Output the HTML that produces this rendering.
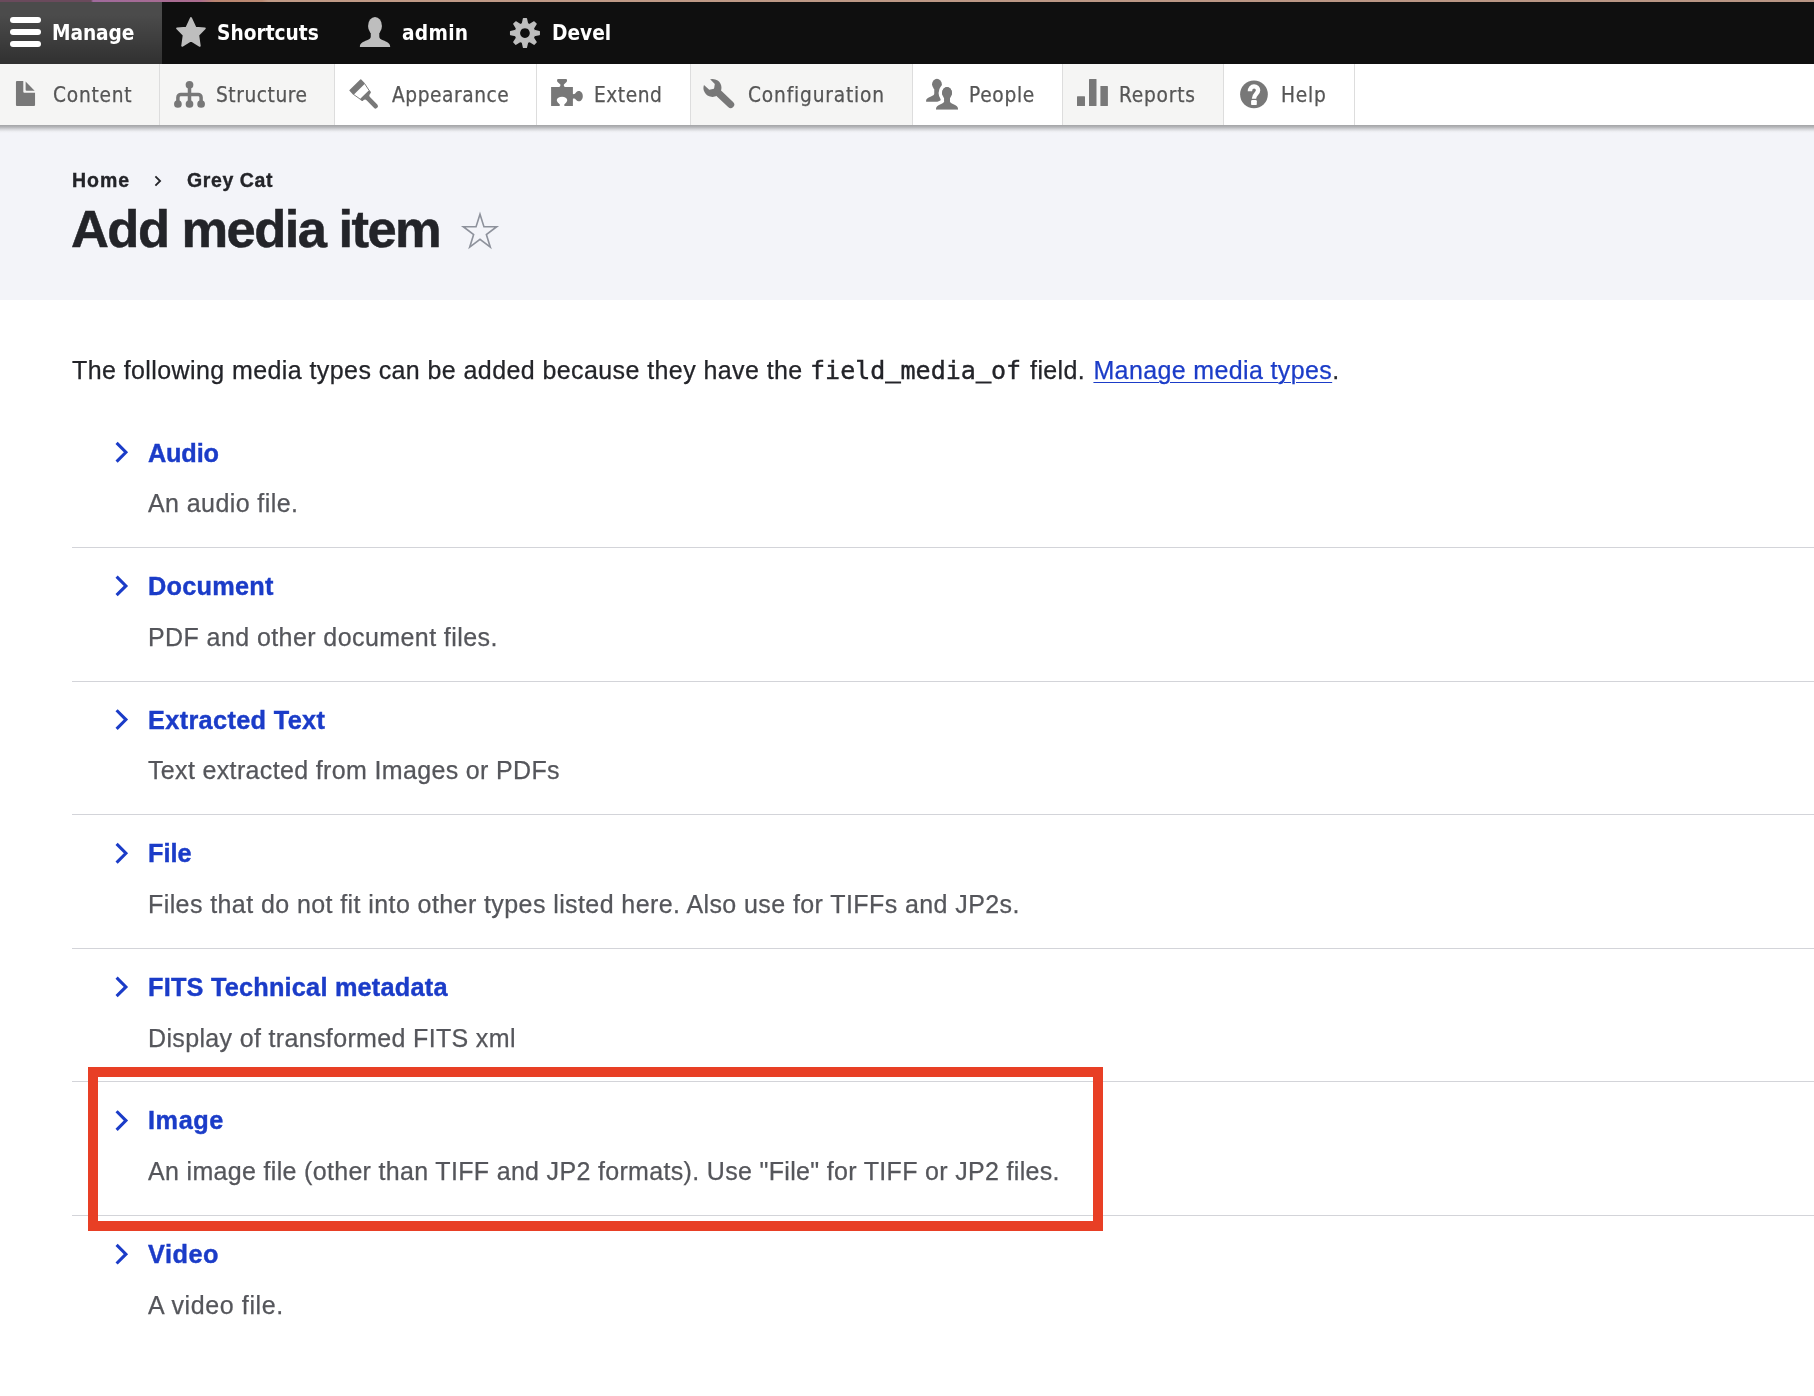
<!DOCTYPE html>
<html lang="en">
<head>
<meta charset="utf-8">
<title>Add media item | Islandora</title>
<style>
html,body{margin:0;padding:0;}
body{width:1814px;height:1396px;position:relative;overflow:hidden;background:#fff;
  font-family:"Liberation Sans",sans-serif;color:#232429;}
.abs{position:absolute;white-space:nowrap;}
span.abs,h1.abs,p.abs{will-change:transform;}
/* ---------- top strip ---------- */
#strip{left:0;top:0;width:1814px;height:2px;
  background:linear-gradient(90deg,#6a4a5c 0,#6a4a5c 91px,#a06a9c 93px,#ab6c8e 200px,#b9846f 215px,#bb8a72 262px,#c09a86 268px,#b89584 100%);}
/* ---------- toolbar bar ---------- */
#bar{left:0;top:2px;width:1814px;height:62px;background:#0f0f0f;}
#manage{left:0;top:2px;width:162px;height:62px;
  background:linear-gradient(rgba(255,255,255,.25) 20%,rgba(255,255,255,0) 200%);}
.tb{font-family:"DejaVu Sans Condensed","DejaVu Sans",sans-serif;font-weight:bold;font-size:20.7px;line-height:30px;color:#fff;top:18px;}
/* ---------- tray ---------- */
#tray{left:0;top:64px;width:1814px;height:61px;background:#fff;}
#trayshadow{left:0;top:125px;width:1814px;height:8px;
  background:linear-gradient(#a3a4a6 0,#b4b5b8 25%,#d6d7db 55%,#ecedf1 80%,#f3f4f9 100%);}
.tab{top:64px;height:61px;border-right:1px solid #dddddd;box-sizing:border-box;}
.tab.g{background:#f5f5f4;}
.tr{-webkit-text-stroke:.25px #565656;font-family:"DejaVu Sans Condensed","DejaVu Sans",sans-serif;font-size:20.7px;letter-spacing:.55px;line-height:30px;color:#565656;top:80px;}
/* ---------- header ---------- */
#header{left:0;top:133px;width:1814px;height:167px;background:#f3f4f9;}
.bc{-webkit-text-stroke:.35px #232429;font-weight:bold;font-size:19.5px;letter-spacing:.6px;line-height:24px;top:168px;color:#232429;}
#title{-webkit-text-stroke:.5px #232429;left:71px;top:199px;font-weight:bold;font-size:52.5px;line-height:60px;letter-spacing:-1.55px;color:#232429;}
/* ---------- content ---------- */
#intro{-webkit-text-stroke:.25px;left:72px;top:355px;font-size:25px;letter-spacing:.37px;line-height:30px;color:#232429;}
#intro code{font-family:"DejaVu Sans Mono","Liberation Mono",monospace;font-size:25.05px;letter-spacing:0;margin:0 1.600px 0 0;-webkit-text-stroke:.4px;}
#in_a{letter-spacing:.41px;}
.us{position:relative;top:-2.100px;-webkit-text-stroke:1px #232429;}
#in_b{margin-right:1px;}
#intro a{color:#1b3cc8;text-decoration:underline;text-decoration-thickness:1.2px;text-underline-offset:3px;}
.it{-webkit-text-stroke:.4px #1b3cc8;left:147.500px;font-weight:bold;font-size:25.3px;letter-spacing:.3px;line-height:30px;color:#1b3cc8;}
.ds{-webkit-text-stroke:.25px #55565b;left:148px;font-size:25px;letter-spacing:.37px;line-height:30px;color:#55565b;}
.hr{left:72px;width:1742px;height:1px;background:#d3d4d9;}
#redbox{left:88px;top:1067px;width:1015px;height:164px;box-sizing:border-box;border:10px solid #e83f25;}
svg{position:absolute;left:0;top:0;overflow:visible;}
</style>
</head>
<body>
<div class="abs" id="strip"></div>
<div class="abs" id="bar"></div>
<div class="abs" id="manage"></div>
<div class="abs" id="tray"></div>
<div class="abs tab g" style="left:0;width:160px"></div>
<div class="abs tab g" style="left:160px;width:175px"></div>
<div class="abs tab" style="left:335px;width:202px"></div>
<div class="abs tab" style="left:537px;width:154px"></div>
<div class="abs tab g" style="left:691px;width:222px"></div>
<div class="abs tab" style="left:913px;width:150px"></div>
<div class="abs tab g" style="left:1063px;width:161px"></div>
<div class="abs tab" style="left:1224px;width:131px"></div>
<div class="abs" id="trayshadow"></div>
<div class="abs" id="header"></div>

<span class="abs tb" id="t_manage" style="left:51.500px;letter-spacing:-.1px">Manage</span>
<span class="abs tb" id="t_shortcuts" style="left:217px">Shortcuts</span>
<span class="abs tb" id="t_admin" style="left:401.500px;letter-spacing:.3px">admin</span>
<span class="abs tb" id="t_devel" style="left:552px">Devel</span>

<span class="abs tr" id="t_content" style="left:53px;letter-spacing:.75px">Content</span>
<span class="abs tr" id="t_structure" style="left:216px">Structure</span>
<span class="abs tr" id="t_appearance" style="left:392px">Appearance</span>
<span class="abs tr" id="t_extend" style="left:594px">Extend</span>
<span class="abs tr" id="t_config" style="left:748px;letter-spacing:.82px">Configuration</span>
<span class="abs tr" id="t_people" style="left:969px;letter-spacing:.69px">People</span>
<span class="abs tr" id="t_reports" style="left:1119px;letter-spacing:.78px">Reports</span>
<span class="abs tr" id="t_help" style="left:1281px;letter-spacing:.75px">Help</span>

<span class="abs bc" id="bc_home" style="left:72px;letter-spacing:1px">Home</span>
<span class="abs bc" id="bc_cat" style="left:187px">Grey Cat</span>
<h1 class="abs" id="title" style="margin:0">Add media item</h1>

<p class="abs" id="intro" style="margin:0"><span id="in_a">The following media types can be added because they have the</span> <code id="in_code">field<span class="us">_</span>media<span class="us">_</span>of</code> <span id="in_b">field.</span> <a id="in_link">Manage media types</a>.</p>

<span class="abs it" id="i0" style="top:437.90px;letter-spacing:-0.180px">Audio</span>
<span class="abs ds" id="d0" style="top:487.90px;letter-spacing:0.412px">An audio file.</span>
<div class="abs hr" style="top:547px"></div>
<span class="abs it" id="i1" style="top:571.41px;letter-spacing:0.233px">Document</span>
<span class="abs ds" id="d1" style="top:621.57px;letter-spacing:0.417px">PDF and other document files.</span>
<div class="abs hr" style="top:681px"></div>
<span class="abs it" id="i2" style="top:704.92px;letter-spacing:0.342px">Extracted Text</span>
<span class="abs ds" id="d2" style="top:755.24px;letter-spacing:0.346px">Text extracted from Images or PDFs</span>
<div class="abs hr" style="top:814px"></div>
<span class="abs it" id="i3" style="top:838.43px;letter-spacing:0.000px">File</span>
<span class="abs ds" id="d3" style="top:888.91px;letter-spacing:0.412px">Files that do not fit into other types listed here. Also use for TIFFs and JP2s.</span>
<div class="abs hr" style="top:948px"></div>
<span class="abs it" id="i4" style="top:971.94px;letter-spacing:0.214px">FITS Technical metadata</span>
<span class="abs ds" id="d4" style="top:1022.58px;letter-spacing:0.347px">Display of transformed FITS xml</span>
<div class="abs hr" style="top:1081px"></div>
<span class="abs it" id="i5" style="top:1105.45px;letter-spacing:0.570px">Image</span>
<span class="abs ds" id="d5" style="top:1156.25px;letter-spacing:0.325px">An image file (other than TIFF and JP2 formats). Use "File" for TIFF or JP2 files.</span>
<div class="abs hr" style="top:1215px"></div>
<span class="abs it" id="i6" style="top:1238.96px;letter-spacing:0.525px">Video</span>
<span class="abs ds" id="d6" style="top:1289.92px;letter-spacing:0.615px">A video file.</span>
<div class="abs" id="redbox"></div>

<svg id="icons" width="1814" height="1396" viewBox="0 0 1814 1396">
<!-- hamburger -->
<g fill="#fff"><rect x="10" y="17" width="31" height="6" rx="3"/><rect x="10" y="29" width="31" height="6" rx="3"/><rect x="10" y="41" width="31" height="6" rx="3"/></g>
<!-- star -->
<polygon points="190.97,18.00 195.50,27.70 204.90,28.30 198.30,35.20 199.80,45.90 190.97,40.50 182.14,45.90 183.64,35.20 177.04,28.30 186.44,27.70" fill="#bebebe" stroke="#bebebe" stroke-width="1.800" stroke-linejoin="round"/>
<!-- user -->
<g fill="#bebebe"><ellipse cx="375" cy="25.900" rx="6.950" ry="9"/>
<path d="M370.750 31V36.500C370.750 38.500 369.500 39.300 367 40.200C363 41.600 360 43.500 359.900 46.200V47.050H390.150V46.200C390 43.500 387 41.600 383 40.200C380.500 39.300 379.300 38.500 379.300 36.500V31Z"/></g>
<!-- gear -->
<g fill="#bebebe"><path d="M521.70 23.65l1.150-5.100q.1-.5.600-.5h3q.5 0 .6.5l1.150 5.100z" transform="rotate(0 524.95 33.05)"/><path d="M521.70 23.65l1.150-5.100q.1-.5.600-.5h3q.5 0 .6.5l1.150 5.100z" transform="rotate(45 524.95 33.05)"/><path d="M521.70 23.65l1.150-5.100q.1-.5.600-.5h3q.5 0 .6.5l1.150 5.100z" transform="rotate(90 524.95 33.05)"/><path d="M521.70 23.65l1.150-5.100q.1-.5.600-.5h3q.5 0 .6.5l1.150 5.100z" transform="rotate(135 524.95 33.05)"/><path d="M521.70 23.65l1.150-5.100q.1-.5.600-.5h3q.5 0 .6.5l1.150 5.100z" transform="rotate(180 524.95 33.05)"/><path d="M521.70 23.65l1.150-5.100q.1-.5.600-.5h3q.5 0 .6.5l1.150 5.100z" transform="rotate(225 524.95 33.05)"/><path d="M521.70 23.65l1.150-5.100q.1-.5.600-.5h3q.5 0 .6.5l1.150 5.100z" transform="rotate(270 524.95 33.05)"/><path d="M521.70 23.65l1.150-5.100q.1-.5.600-.5h3q.5 0 .6.5l1.150 5.100z" transform="rotate(315 524.95 33.05)"/><path fill-rule="evenodd" d="M524.95 22.75a10.300 10.300 0 1 0 .01 0zM524.95 28.20a4.850 4.850 0 1 1 -.01 0z"/></g>
<!-- content / file -->
<g fill="#787878"><path d="M16.950 81.050H23.300V91.750a1 1 0 0 0 1 1H35.050V105a1 1 0 0 1 -1 1H16.950a1 1 0 0 1 -1 -1V82.050a1 1 0 0 1 1 -1z"/><path d="M25.600 81.500L34.600 90.650H26.600a1 1 0 0 1 -1 -1z"/></g>
<!-- structure -->
<g fill="#787878"><circle cx="189.500" cy="84.800" r="3.850"/><circle cx="177.900" cy="104" r="3.850"/><circle cx="189.500" cy="104" r="3.850"/><circle cx="201.100" cy="104" r="3.850"/>
<path d="M189.500 85v19M177.900 104v-6.600a3 3 0 0 1 3 -3h17.200a3 3 0 0 1 3 3v6.600" fill="none" stroke="#787878" stroke-width="3.500"/></g>
<!-- appearance / brush -->
<g transform="translate(354.900 84.700) rotate(-44)" fill="#787878">
<rect x="-8.150" y="0" width="16.300" height="6.300" rx=".7"/>
<path d="M-7.750 6L-6.250 14M7.750 6L6.250 14" fill="none" stroke="#787878" stroke-width=".9"/>
<path d="M-6.600 13.800h13.200v1.600c0 1.100-.7 1.700-1.700 1.700h-.45c-1.200 0-2.100.9-2.100 2.100v10.600a2.350 2.350 0 0 1 -4.700 0v-10.600c0-1.200-.9-2.100-2.100-2.100h-.45c-1 0-1.700-.6-1.700-1.700z"/>
</g>
<!-- extend / puzzle -->
<path fill="#787878" d="M551.100 86.900H559C560 86.900 560.600 86 560.400 84.600L557.600 82C557 81.400 557.100 80.500 557.100 80Q557.100 79.100 558.100 79.100H566Q567 79.100 567 80C567 80.500 567.100 81.400 566.500 82L563.900 84.600C563.600 86 564.200 86.900 565.200 86.900H572.900V94C574 94.400 575 94 576 92.600C577 91.400 578 91.100 578.900 91.100C581.100 91.100 582.800 93.400 582.800 96.200C582.800 99 581.100 101.300 578.900 101.300C578 101.300 577 101 576 99.800C575 98.400 574 98.200 572.900 98.800V106H564.800C563.600 105.400 564.200 104.300 565.200 103.500C566.500 102.500 567.200 101.500 567.200 100.100C567.200 98 564.900 96.700 562.050 96.700C559.200 96.700 556.800 98 556.800 100.100C556.800 101.500 557.600 102.500 558.900 103.500C559.900 104.300 560.500 105.400 559.300 106H551.100Z"/>
<!-- config / wrench -->
<g fill="#787878"><path d="M710.140 79.220A9 9 0 1 1 703.970 84.940L709.240 89.750L714.050 88.700L714.800 84.030Z"/>
<path d="M716.500 91.200L730.600 104.500" fill="none" stroke="#787878" stroke-width="7.200" stroke-linecap="round"/></g>
<!-- people -->
<g fill="#787878"><ellipse cx="936.950" cy="84.300" rx="4.900" ry="5.500"/>
<path d="M934.250 88V93.500C934.250 95 933 95.700 931 96.400C927.500 97.600 926.100 99 926.100 100.800V101.800H942V88Z"/>
<g stroke="#fff" stroke-width="7" stroke-linejoin="round" paint-order="stroke"><ellipse cx="947.030" cy="93.060" rx="4.960" ry="6"/>
<path d="M944.200 98V101C944.200 102.600 943 103.300 940.500 104.200C937.500 105.300 936 106.800 936 108.800V109.750H958V108.800C958 106.800 956.500 105.300 953.500 104.200C951 103.300 949.900 102.600 949.900 101V98Z"/></g>
<ellipse cx="947.030" cy="93.060" rx="4.960" ry="6"/><rect x="944.200" y="96" width="5.700" height="5"/>
<rect x="930" y="109.750" width="32" height="5" fill="#fff"/>
</g>
<!-- reports -->
<g fill="#787878"><rect x="1077" y="96.200" width="8" height="9.700" rx=".5"/><rect x="1089" y="79.100" width="7.500" height="26.800" rx=".5"/><rect x="1100.400" y="86" width="7.500" height="19.900" rx=".5"/></g>
<!-- help -->
<circle cx="1253.970" cy="94.400" r="13.850" fill="#787878"/>
<path d="M1249.900 91.300C1249.900 88.500 1251.600 86.400 1254 86.400C1256.500 86.400 1258.100 88.100 1258.100 90.300C1258.100 93.800 1254 93.800 1254 98.800" fill="none" stroke="#fff" stroke-width="4.400"/>
<rect x="1251.100" y="100.100" width="5.700" height="5" rx="1.200" fill="#fff"/>
<!-- breadcrumb chevron -->
<path d="M155.400 176.300l4.700 4.700l-4.700 4.700" fill="none" stroke="#232429" stroke-width="1.800"/>
<!-- shortcut star outline -->
<polygon transform="translate(0 -9.300) scale(1 1.04)" points="480.00,214.90 483.94,226.98 496.64,226.99 486.37,234.47 490.29,246.56 480.00,239.10 469.71,246.56 473.63,234.47 463.36,226.99 476.06,226.98" fill="none" stroke="#8e929c" stroke-width="1.600" stroke-linejoin="miter"/>
<!-- list chevrons -->
<path d="M116.600 442.95l9.300 9.300l-9.300 9.300" fill="none" stroke="#1b3cc8" stroke-width="3.100" stroke-miterlimit="10"/>
<path d="M116.600 576.61l9.300 9.300l-9.300 9.300" fill="none" stroke="#1b3cc8" stroke-width="3.100" stroke-miterlimit="10"/>
<path d="M116.600 710.27l9.300 9.300l-9.300 9.300" fill="none" stroke="#1b3cc8" stroke-width="3.100" stroke-miterlimit="10"/>
<path d="M116.600 843.93l9.300 9.300l-9.300 9.300" fill="none" stroke="#1b3cc8" stroke-width="3.100" stroke-miterlimit="10"/>
<path d="M116.600 977.59l9.300 9.300l-9.300 9.300" fill="none" stroke="#1b3cc8" stroke-width="3.100" stroke-miterlimit="10"/>
<path d="M116.600 1111.25l9.300 9.300l-9.300 9.300" fill="none" stroke="#1b3cc8" stroke-width="3.100" stroke-miterlimit="10"/>
<path d="M116.600 1244.91l9.300 9.300l-9.300 9.300" fill="none" stroke="#1b3cc8" stroke-width="3.100" stroke-miterlimit="10"/>
</svg>
</body>
</html>
